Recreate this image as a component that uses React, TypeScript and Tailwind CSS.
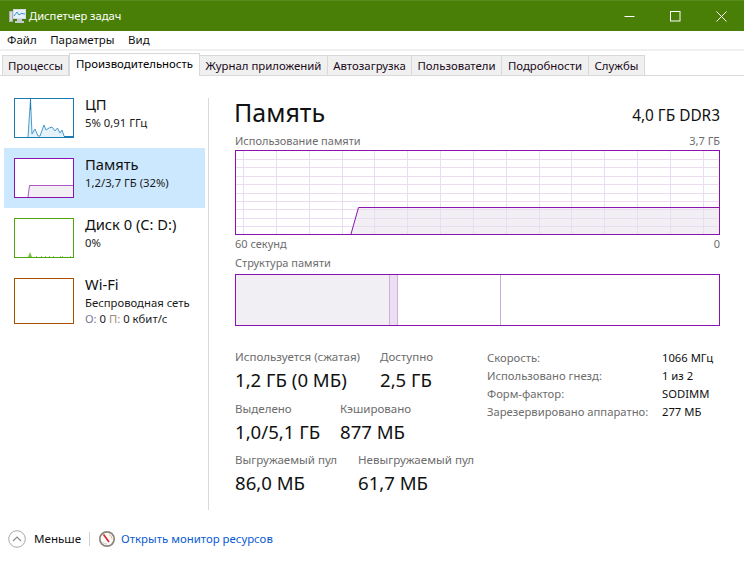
import React from "react";

const Purple = "#8b12ae";
const Grid = "#ecdcf2";

function TaskIcon() {
  return (
    <svg width="18" height="16" viewBox="0 0 18 16" className="shrink-0">
      <rect x="5.5" y="1.5" width="12" height="9" fill="#e6f2fa" stroke="#d3dbe1" />
      <path d="M6 8 L9 4 L11 7 L13 5.5 L17 6" fill="none" stroke="#3d8fd0" strokeWidth="1" />
      <rect x="1.5" y="3.5" width="3" height="10" fill="#d5dadd" stroke="#aab2b8" />
      <path d="M9 11h5v2h2v2H7v-2h2z" fill="#c5ccd1" />
    </svg>
  );
}

function WindowControls() {
  return (
    <div className="flex items-center">
      <div className="flex h-[30px] w-[46px] items-center justify-center">
        <svg width="11" height="11" viewBox="0 0 11 11"><path d="M0.5 5.5H10.5" stroke="#fff" strokeWidth="1" /></svg>
      </div>
      <div className="flex h-[30px] w-[46px] items-center justify-center">
        <svg width="11" height="11" viewBox="0 0 11 11"><rect x="0.5" y="0.5" width="9.5" height="9.5" fill="none" stroke="#fff" /></svg>
      </div>
      <div className="flex h-[30px] w-[46px] items-center justify-center">
        <svg width="11" height="11" viewBox="0 0 11 11"><path d="M0.5 0.5L10.5 10.5M10.5 0.5L0.5 10.5" stroke="#fff" strokeWidth="1" /></svg>
      </div>
    </div>
  );
}

const tabs: [string, number][] = [
  ["Процессы", 67],
  ["Производительность", 131],
  ["Журнал приложений", 128],
  ["Автозагрузка", 84],
  ["Пользователи", 90],
  ["Подробности", 87],
  ["Службы", 56],
];

function Tabs() {
  return (
    <div className="relative flex h-[27px] items-end border-b border-[#d9d9d9] pl-[2px]">
      <div className="absolute left-0 right-0 top-0 h-[2px] bg-[#f0f0f0]" />
      {tabs.map(([t, w], i) =>
        t === "Производительность" ? (
          <div key={t} style={{ width: w }} className="relative z-10 -mb-px flex h-[23px] items-center justify-center border-x border-t border-[#d9d9d9] bg-white pb-[2px] text-[11.4px] text-black">
            {t}
          </div>
        ) : (
          <div key={t} style={{ width: w }} className={`flex h-[20px] items-center justify-center border-r border-t border-[#d9d9d9] bg-[#f0f0f0] text-[11.4px] text-[#1a0a1a] ${i === 0 ? "border-l" : ""}`}>
            {t}
          </div>
        )
      )}
    </div>
  );
}

function CpuThumb() {
  const line = "M14 39L16.5 2L18 36L21 31L24 38L26 38L30 27L32 32L35 30L38 29L41 33L43.5 30L46 35L48 32L50 38";
  return (
    <svg width="60" height="40" viewBox="0 0 60 40" className="shrink-0">
      <rect x="0.5" y="0.5" width="59" height="39" fill="#fff" stroke="#1b7bb5" />
      <path d={`${line}V39H14Z`} fill="#e6f2f9" />
      <path d={line} fill="none" stroke="#4b9ac9" strokeWidth="1" />
      <path d="M16.5 1V12" stroke="#1b7bb5" strokeWidth="1" />
      <path d="M50 38.5H59" stroke="#1b7bb5" strokeWidth="1" />
    </svg>
  );
}

function MemThumb() {
  return (
    <svg width="60" height="40" viewBox="0 0 60 40" className="shrink-0">
      <rect x="0.5" y="0.5" width="59" height="39" fill="#fff" stroke={Purple} />
      <path d="M14 39L15.5 27.5H59V39Z" fill="#f1eff4" />
      <path d="M14 39L15.5 27.5H59" fill="none" stroke={Purple} strokeOpacity="0.7" />
      <rect x="0.5" y="0.5" width="59" height="39" fill="none" stroke={Purple} />
    </svg>
  );
}

function DiskThumb() {
  return (
    <svg width="60" height="40" viewBox="0 0 60 40" className="shrink-0">
      <rect x="0.5" y="0.5" width="59" height="39" fill="#fff" stroke="#4da60c" />
      <path d="M14 39L16 34L18 39Z" fill="#7dbf4d" />
      <path d="M22 38.5h1M27 38.5h1M31 38.5h1M35 38.5h1M39 38.5h1M46 38.5h1M48 38.5h1M56 38.5h1" stroke="#8fc96a" />
    </svg>
  );
}

function WifiThumb() {
  return <div className="h-[46px] w-[60px] shrink-0 border border-[#a74f01] bg-white" />;
}

function SideRow({ thumb, name, lines, selected, h }: { thumb: React.ReactNode; name: string; lines: React.ReactNode[]; selected?: boolean; h: string }) {
  return (
    <div className={`ml-1 flex w-[201px] items-start gap-[11px] pl-[10px] pt-[10px] ${h} ${selected ? "bg-[#cce8ff]" : ""}`}>
      {thumb}
      <div className="-mt-[5px] flex flex-col">
        <div className="text-[14.7px] leading-[22px] text-[#111]">{name}</div>
        {lines.map((l, i) => (
          <div key={i} className="text-[11.3px] leading-[16px] text-[#1a1a1a]">{l}</div>
        ))}
      </div>
    </div>
  );
}

function MainChart() {
  const hs = [9.5, 17.5, 26.5, 34.5, 43.5, 51.5, 59.5, 68.5, 76.5];
  const vs = [8.5, 41.5, 74.5, 107.5, 139.5, 172.5, 205.5, 238.5, 271.5, 304.5, 336.5, 369.5, 402.5, 435.5, 468.5];
  return (
    <svg width="485" height="85" viewBox="0 0 485 85" className="block">
      <rect width="485" height="85" fill="#fff" />
      <path d="M116 84L123.5 57.5H485V85H116Z" fill="#f1eff4" />
      {hs.map((y) => <path key={y} d={`M1 ${y}H483`} stroke={Grid} strokeWidth="1" />)}
      {vs.map((x) => <path key={x} d={`M${x} 1V84`} stroke={Grid} strokeWidth="1" />)}
      <path d="M116 84L123.5 57.5H484" fill="none" stroke={Purple} strokeWidth="1" />
      <rect x="0.5" y="0.5" width="484" height="84" fill="none" stroke={Purple} strokeWidth="1" />
    </svg>
  );
}

function Stat({ label, value, w }: { label: string; value: string; w: string }) {
  return (
    <div className={`${w} shrink-0`}>
      <div className="whitespace-nowrap text-[11.55px] leading-[16px] text-[#6d6d6d]">{label}</div>
      <div className="mt-[3px] whitespace-nowrap text-[18.6px] leading-[24px] text-[#111]">{value}</div>
    </div>
  );
}

function Resmon() {
  return (
    <svg width="18" height="18" viewBox="0 0 18 18" className="shrink-0">
      <circle cx="9" cy="9" r="7.2" fill="#fbfaf8" stroke="#8a847c" strokeWidth="1.7" />
      <path d="M11 4.5A5 5 0 0 1 14 9" fill="none" stroke="#e6b98f" strokeWidth="1" />
      <path d="M5.5 4.5L11 12" stroke="#d6232a" strokeWidth="1.6" />
      <path d="M5 12.5A5 5 0 0 0 9 14" fill="none" stroke="#cfcac4" />
    </svg>
  );
}

export default function App() {
  return (
    <div className="flex h-[562px] w-[744px] flex-col overflow-hidden bg-white font-['Noto_Sans',sans-serif]">
      <div className="flex h-[31px] items-center justify-between border-t border-[#5b8c1e] bg-[#4a7f07]">
        <div className="flex items-center gap-[3px] pl-[8px] text-[11.2px] text-white">
          <TaskIcon />
          <span>Диспетчер задач</span>
        </div>
        <WindowControls />
      </div>
      <div className="flex h-[18px] items-center gap-[13.5px] pl-[7px] text-[11.5px] text-[#111]">
        <span>Файл</span>
        <span>Параметры</span>
        <span>Вид</span>
      </div>
      <Tabs />
      <div className="flex min-h-0 flex-1">
        <div className="relative w-[209px] shrink-0 pt-[12px]">
          <SideRow h="h-[60px]" thumb={<CpuThumb />} name="ЦП" lines={["5%  0,91 ГГц"]} />
          <SideRow h="h-[60px]" selected thumb={<MemThumb />} name="Память" lines={["1,2/3,7 ГБ (32%)"]} />
          <SideRow h="h-[60px]" thumb={<DiskThumb />} name="Диск 0 (C: D:)" lines={["0%"]} />
          <SideRow
            h="h-[66px]"
            thumb={<WifiThumb />}
            name="Wi-Fi"
            lines={[
              "Беспроводная сеть",
              <span key="s"><span className="text-[#7a7a9a]">О:</span> 0 <span className="text-[#a08a7a]">П:</span> 0 кбит/с</span>,
            ]}
          />
          <div className="absolute bottom-[6px] right-0 top-[22px] w-px bg-[#d9d9d9]" />
        </div>
        <div className="flex-1 pl-[26px] pr-[24px] pt-[20px]">
          <div className="flex items-center justify-between">
            <div className="-ml-px text-[25px] leading-[32px] text-[#111]">Память</div>
            <div className="mt-[8px] text-[15.4px] leading-[20px] text-[#111]">4,0 ГБ DDR3</div>
          </div>
          <div className="mb-[2px] mt-[5px] flex justify-between text-[11px] leading-[15px] text-[#6d6d6d]">
            <span>Использование памяти</span>
            <span>3,7 ГБ</span>
          </div>
          <MainChart />
          <div className="mt-[1px] flex justify-between text-[11px] leading-[15px] text-[#6d6d6d]">
            <span>60 секунд</span>
            <span>0</span>
          </div>
          <div className="mt-[4px] text-[11px] leading-[15px] text-[#6d6d6d]">Структура памяти</div>
          <div className="mt-[4px] flex h-[52px] w-[485px] border border-[#8b12ae]">
            <div className="w-[154px] border-r border-[#cfaedb] bg-[#f1eff4]" />
            <div className="w-[8px] border-r border-[#cfaedb] bg-[#ecdff2]" />
            <div className="w-[103px] border-r border-[#cfaedb]" />
            <div className="flex-1" />
          </div>
          <div className="mt-[23px] flex">
            <div>
              <div className="flex"><Stat w="w-[145px]" label="Используется (сжатая)" value="1,2 ГБ (0 МБ)" /><Stat w="w-[90px]" label="Доступно" value="2,5 ГБ" /></div>
              <div className="mt-[9px] flex"><Stat w="w-[105px]" label="Выделено" value="1,0/5,1 ГБ" /><Stat w="w-[120px]" label="Кэшировано" value="877 МБ" /></div>
              <div className="mt-[8px] flex"><Stat w="w-[123px]" label="Выгружаемый пул" value="86,0 МБ" /><Stat w="w-[120px]" label="Невыгружаемый пул" value="61,7 МБ" /></div>
            </div>
            <div className="ml-[9px] grid grid-cols-[175px_auto] content-start text-[11.25px] leading-[18px]">
              <span className="text-[#6d6d6d]">Скорость:</span><span className="text-[#111]">1066 МГц</span>
              <span className="text-[#6d6d6d]">Использовано гнезд:</span><span className="text-[#111]">1 из 2</span>
              <span className="text-[#6d6d6d]">Форм-фактор:</span><span className="text-[#111]">SODIMM</span>
              <span className="whitespace-nowrap text-[#6d6d6d]">Зарезервировано аппаратно:</span><span className="text-[#111]">277 МБ</span>
            </div>
          </div>
        </div>
      </div>
      <div className="flex h-[46px] items-center pl-[8px] text-[11.4px]">
        <svg width="18" height="18" viewBox="0 0 18 18" className="shrink-0">
          <circle cx="9" cy="9" r="8.3" fill="#fff" stroke="#a9a9a9" />
          <path d="M5 11L9 7L13 11" fill="none" stroke="#8c8c8c" strokeWidth="1.2" />
        </svg>
        <span className="ml-[8px] text-[11.6px] text-[#111]">Меньше</span>
        <div className="ml-[8px] h-[14px] w-px bg-[#d0d0d0]" />
        <div className="ml-[8px]"><Resmon /></div>
        <span className="ml-[5px] text-[#0a5bd3]">Открыть монитор ресурсов</span>
      </div>
    </div>
  );
}
